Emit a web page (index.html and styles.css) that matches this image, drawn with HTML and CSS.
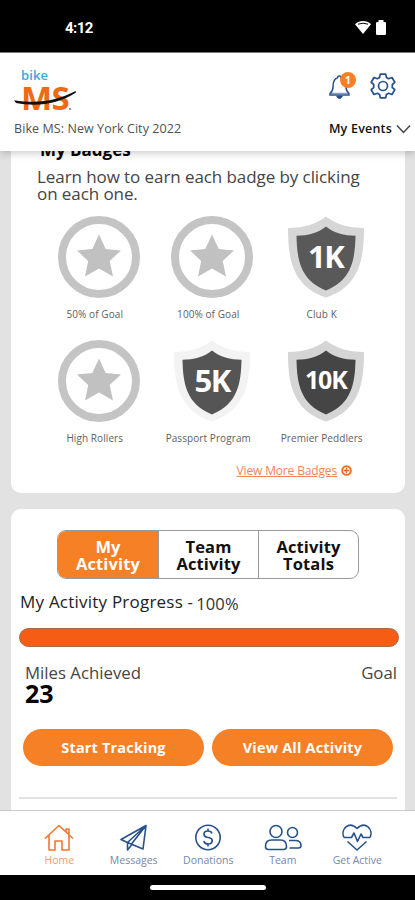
FILE: index.html
```html
<!DOCTYPE html>
<html lang="en">
<head>
<meta charset="utf-8">
<title>Bike MS</title>
<link rel="stylesheet" href="styles.css">
</head>
<body>
<svg class="defs" width="0" height="0" aria-hidden="true">
  <symbol id="star" viewBox="0 0 82 82">
    <circle cx="41" cy="41" r="37" fill="#fff" stroke="#c4c4c4" stroke-width="8"/>
    <path d="M41 18.500l6.700 14.500 15.300 1.500-11.300 10.500 3.300 15.500-14-8-14 8 3.200-15.500L19 34.500l15.300-1.500z" fill="#c1c1c1"/>
  </symbol>
  <symbol id="shield" viewBox="0 0 82 82">
    <path d="M41 .5C32 7.500 19 12 3 12c0 28 3 58 38 69.500C76 70 79 40 79 12 63 12 50 7.500 41 .5z" fill="var(--rim)"/>
    <path d="M41 10.500C33 17 23 19.500 11.500 19.800 12 43 15 64 41 74.500 67 64 70 43 70.500 19.800 59 19.500 49 17 41 10.500z" fill="var(--core)"/>
  </symbol>
</svg>
<div class="phone">
  <div class="status">
    <span class="clock">4:12</span>
    <svg class="status-icons" width="32" height="16" viewBox="0 0 32 16">
      <path d="M0 4.300C4.500 0 11.500 0 16 4.300L8 14z" fill="#fff"/>
      <path d="M3 4.200Q8 2.200 13 4.200" fill="none" stroke="#000" stroke-width="1"/>
      <path d="M23.500 2V0h5v2h1.200q1.300 0 1.300 1.300v10.400q0 1.300-1.300 1.300h-7.400q-1.300 0-1.300-1.300V3.300Q21 2 22.300 2z" fill="#fff"/>
    </svg>
  </div>

  <header class="header">
    <div class="brand-row">
      <div class="logo">
        <span class="logo-bike">bike</span>
        <span class="logo-ms">MS</span>
        <svg class="swoosh" width="63" height="16" viewBox="0 0 63 16"><path d="M0 10.200C25 14 42 11 61.500 1l.5 1.500C44 14 24 17 2 13z" fill="#111"/></svg>
        <i class="mark"></i>
      </div>
      <div class="actions">
        <div class="bell">
          <svg width="24" height="28" viewBox="0 0 24 28" fill="none" stroke="#27518c" stroke-width="1.500">
            <path d="M2 22v-1.500c2.500-2 3-3.500 3-6.500 0-5 1.500-8.500 4.500-9.300C9.500 2.300 13 2.300 13 4.700c3.500 1 5 4.300 5 9.300 0 3 .7 4.500 3 6.500V22z"/>
            <path d="M3 20.300h17" stroke-width=".7"/><path d="M8.800 23c.6 3.300 4.800 3.300 5.400 0z" fill="#27518c" stroke-width="1"/>
          </svg>
          <b class="count">1</b>
        </div>
        <svg class="gear" width="26" height="26" viewBox="0 0 26 26" fill="none" stroke="#27518c" stroke-width="1.700" stroke-linejoin="round">
          <path d="M10.300 1.200h5.400l.7 3.200 2.200 1.300 3.400-1.200 2.800 4.800-2.500 2.200v3l2.500 2.200-2.800 4.800-3.400-1.200-2.200 1.300-.7 3.200h-5.400l-.7-3.200-2.200-1.300L4 21.500l-2.800-4.800 2.500-2.200v-3L1.200 9.300 4 4.500l3.400 1.200 2.200-1.300z"/>
          <circle cx="13" cy="13" r="4.500"/>
        </svg>
      </div>
    </div>
    <div class="event-row">
      <span class="event-name">Bike MS: New York City 2022</span>
      <span class="my-events"><span class="my-events-text">My Events</span><svg width="15" height="10" viewBox="0 0 15 10"><path d="M1 1.500l6.500 7L14 1.500" fill="none" stroke="#444" stroke-width="1.500"/></svg></span>
    </div>
  </header>

  <main class="content">
    <section class="card badges-card">
      <h2 class="badges-title">My Badges</h2>
      <p class="intro">Learn how to earn each badge by clicking<br>on each one.</p>
      <div class="badges">
        <div class="badge"><svg class="emblem"><use href="#star"/></svg><span class="name">50% of Goal</span></div>
        <div class="badge"><svg class="emblem"><use href="#star"/></svg><span class="name">100% of Goal</span></div>
        <div class="badge club"><svg class="emblem"><use href="#shield"/></svg><b class="value">1K</b><span class="name">Club K</span></div>
        <div class="badge"><svg class="emblem"><use href="#star"/></svg><span class="name">High Rollers</span></div>
        <div class="badge passport"><svg class="emblem"><use href="#shield"/></svg><b class="value">5K</b><span class="name">Passport Program</span></div>
        <div class="badge premier"><svg class="emblem"><use href="#shield"/></svg><b class="value">10K</b><span class="name">Premier Peddlers</span></div>
      </div>
      <div class="more"><a class="more-link">View More Badges</a><svg width="11" height="11" viewBox="0 0 11 11"><circle cx="5.500" cy="5.500" r="4.300" fill="none" stroke="#f26a1b" stroke-width="1.900"/><path d="M5.500 3v5M3 5.500h5" stroke="#f26a1b" stroke-width="1.500"/></svg></div>
    </section>

    <section class="card activity-card">
      <div class="tabs">
        <div class="tab active">My<br>Activity</div>
        <div class="tab">Team<br>Activity</div>
        <div class="tab">Activity<br>Totals</div>
      </div>
      <div class="progress-label"><span class="progress-title">My Activity Progress -</span><span class="percent">100%</span></div>
      <div class="bar"></div>
      <div class="totals"><span class="miles-label">Miles Achieved</span><span class="goal-label">Goal</span></div>
      <strong class="miles">23</strong>
      <div class="buttons"><div class="button">Start Tracking</div><div class="button">View All Activity</div></div>
      <div class="rule"></div>
    </section>
  </main>

  <nav class="nav">
    <div class="item home">
      <svg width="30" height="28" viewBox="0 0 30 28"><path d="M1 14.500L15 1.500l14 13M5 11v15h6v-9h7v9h7V11M22 8V5h3v6"/></svg>
      <span>Home</span>
    </div>
    <div class="item">
      <svg width="30" height="28" viewBox="0 0 30 28"><path d="M27 1.500L2 15.500l6.500 3L24 25zM27 1.500L8.500 18.500V26l4.500-5.500M27 1.500L12.500 20"/></svg>
      <span>Messages</span>
    </div>
    <div class="item">
      <svg width="30" height="28" viewBox="0 0 30 28"><circle cx="15" cy="13.500" r="12.200"/><path d="M19 9.500c-.6-2-2-2.500-4-2.500-5.200 0-5.300 5.200-1 6.200l2.500.6c4.200 1.200 3.500 6.200-1.500 6.200-2.300 0-3.700-.8-4.200-3M15 4.500V7m0 13v2.500"/></svg>
      <span>Donations</span>
    </div>
    <div class="item">
      <svg width="38" height="28" viewBox="0 0 38 28"><circle cx="12" cy="7.500" r="6"/><path d="M4.500 25.500q-3 0-3-3 0-6.500 6-6.500h9q6 0 6 6.500 0 3-3 3z"/><circle cx="28.500" cy="8.500" r="5"/><path d="M25 16.500h6q6 0 6 5 0 2.500-2.500 2.500h-9"/></svg>
      <span>Team</span>
    </div>
    <div class="item">
      <svg width="32" height="28" viewBox="0 0 32 28"><path d="M3 13.500C-1 5 8-3.500 16 4.500 24-3.500 33 5 29 13.500M3 13.500h7.500L13 9l3.500 8.500L20 10l2 3.500h7M6.500 17.500L16 26l9.500-8.500"/></svg>
      <span>Get Active</span>
    </div>
  </nav>
  <div class="gesture"><div class="handle"></div></div>
</div>
</body>
</html>
```
FILE: styles.css
```css
* { box-sizing: border-box; }
body { margin: 0; font-family: "Open Sans", sans-serif; background: #000; color: #444; }
.defs { position: absolute; }
.phone { width: 415px; height: 900px; display: flex; flex-direction: column; overflow: hidden; }
.phone svg { display: block; flex: none; }
.phone span { white-space: nowrap; }

.status { height: 52px; flex: none; background: #000; display: flex; justify-content: space-between; padding: 20px 28px 0 65px; }
.clock { color: #fff; font: 700 15px/16px Roboto, sans-serif; letter-spacing: -.6px; }

.header { height: 99px; flex: none; background: #fff; position: relative; z-index: 1; box-shadow: 0 2px 8px rgba(0,0,0,.22); border-top: 1px solid #777; padding: 0 4px 0 14px; }
.brand-row { height: 65px; display: flex; justify-content: space-between; }
.logo { position: relative; width: 63px; display: flex; flex-direction: column; padding: 14px 0 0 7px; }
.logo-bike { font: 600 13px/16px "Open Sans", sans-serif; color: #36a9df; letter-spacing: .1px; }
.logo-ms { font: 700 33px/30px "Open Sans", sans-serif; color: #ee6b16; letter-spacing: -.5px; }
.swoosh { position: absolute; left: 0; top: 37px; }
.mark { position: absolute; left: 55px; top: 55px; width: 2px; height: 2px; background: #999; }
.actions { display: flex; gap: 18px; padding: 20px 15px 0 0; }
.bell { position: relative; width: 24px; }
.count { position: absolute; left: 12px; top: -1px; width: 16px; height: 16px; border-radius: 50%; background: #f58025; color: #fff; font-size: 11px; line-height: 16px; text-align: center; }
.event-row { display: flex; justify-content: space-between; line-height: 22px; font-size: 12.500px; }
.event-name { letter-spacing: .08px; color: #505050; }
.my-events { display: flex; align-items: center; gap: 4px; color: #111; font-weight: 600; letter-spacing: .2px; }

.content { flex: 1; min-height: 0; overflow: hidden; background: #e2e2e2; padding: 0 10px 0 11px; }
.card { background: #fff; border-radius: 10px; }
.badges-card { height: 342px; padding: 0 22px 0 26px; overflow: hidden; border-radius: 0 0 10px 10px; }
.badges-title { margin: -13px 0 0 3px; font-size: 17px; line-height: 24px; color: #000; }
.intro { margin: 6px 0 0; font-size: 17px; line-height: 17px; height: 48px; color: #444; letter-spacing: -.08px; white-space: nowrap; }
.badges { display: grid; grid-template-columns: repeat(3, 113.500px); grid-auto-rows: 124px; margin-left: 5px; height: 244px; }
.badge { position: relative; display: flex; flex-direction: column; align-items: center; font-size: 10px; color: #606060; line-height: 14px; }
.name { margin-right: 8px; letter-spacing: .08px; }
.emblem { width: 82px; height: 82px; margin-bottom: 9px; }
.club { --rim: #d6d6d6; --core: #595959; }
.passport { --rim: #f3f3f3; --core: #555; }
.premier { --rim: #d5d5d5; --core: #454545; }
.value { position: absolute; top: 23px; left: 0; width: 100%; text-align: center; color: #fff; font-size: 31px; font-weight: 700; line-height: 34px; letter-spacing: -1.300px; }
.premier .value { font-size: 25px; line-height: 32px; letter-spacing: -1.200px; }
.more { display: flex; align-items: center; justify-content: flex-end; gap: 4px; padding-right: 31px; height: 20px; color: #f48453; font-size: 12px; letter-spacing: -.15px; }
.more-link { text-decoration: underline; white-space: nowrap; }

.activity-card { margin-top: 16px; height: 320px; padding: 21px 6px 0 8px; }
.tabs { width: 302px; height: 49px; margin-left: 38px; display: grid; grid-template-columns: 101px 100px 99px; border: 1px solid #999; border-radius: 9px; overflow: hidden; }
.tab { text-align: center; font-weight: 700; font-size: 16.500px; line-height: 17px; padding-top: 7px; color: #111; border-right: 1px solid #999; letter-spacing: .15px; }
.tab:last-child { border-right: 0; }
.tab.active { background: #f58025; color: #fff; }
.progress-label { display: flex; height: 49px; padding: 13px 0 0 1px; font-size: 17px; line-height: 20px; color: #333; gap: 3px; }
.progress-title { color: #222; letter-spacing: .22px; }
.percent { padding-top: 2px; font-size: 16.500px; letter-spacing: .1px; }
.bar { width: 380px; height: 19px; border-radius: 9.500px; background: #f55c14; border: 1px solid #a26b4c; }
.totals { display: flex; justify-content: space-between; padding: 16px 2px 0 6px; font-size: 16.800px; line-height: 20px; }
.miles { display: block; margin-left: 6px; font-size: 25px; line-height: 21px; color: #000; height: 46px; }
.buttons { display: flex; gap: 8px; margin-left: 4px; }
.button { width: 181px; height: 37px; border-radius: 19px; background: #f58025; color: #fff; font-weight: 700; font-size: 14.500px; line-height: 37px; text-align: center; letter-spacing: .17px; }
.rule { width: 378px; height: 2px; margin-top: 31px; background: #e2e2e2; }

.nav { height: 65px; flex: none; background: #fff; border-top: 1px solid #c8c8c8; display: grid; grid-template-columns: repeat(5, 74.500px); padding: 13px 0 0 22px; }
.item { display: flex; flex-direction: column; align-items: center; font-size: 10.500px; line-height: 14px; gap: 1px; color: #7588ad; }
.item svg { fill: none; stroke: #27518c; stroke-width: 1.600; stroke-linejoin: round; }
.home { color: #f89a72; }
.home svg { stroke: #f27635; }
.gesture { height: 25px; flex: none; display: flex; justify-content: center; padding-top: 10px; }
.handle { width: 116px; height: 5px; border-radius: 3px; background: #fff; }
```
